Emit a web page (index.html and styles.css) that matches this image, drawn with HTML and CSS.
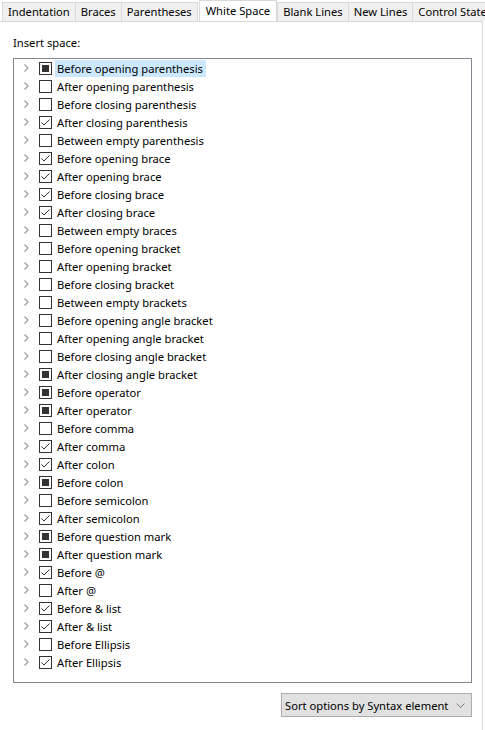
FILE: index.html
```html
<!DOCTYPE html>
<html>
<head>
<meta charset="utf-8">
<link rel="stylesheet" href="styles.css">
</head>
<body>
<div class="tabs">
  <div class="tab first">Indentation</div>
  <div class="tab">Braces</div>
  <div class="tab">Parentheses</div>
  <div class="tab active">White Space</div>
  <div class="tab">Blank Lines</div>
  <div class="tab">New Lines</div>
  <div class="tab">Control State</div>
</div>
<div class="panel">
  <div class="label">Insert space:</div>
  <div class="tree" id="tree"></div>
  <div class="footer">
    <div class="select">
      <span class="select-text">Sort options by Syntax element</span>
      <svg class="caret" width="9" height="5" viewBox="0 0 9 5"><path d="M0.5 0.5 L4.5 4.5 L8.5 0.5" fill="none" stroke="#7a7a7a" stroke-width="1"/></svg>
    </div>
  </div>
</div>
<script src="app.js"></script>
</body>
</html>
```
FILE: app.js
```js
var items = [
  ["Before opening parenthesis","i"],
  ["After opening parenthesis",""],
  ["Before closing parenthesis",""],
  ["After closing parenthesis","c"],
  ["Between empty parenthesis",""],
  ["Before opening brace","c"],
  ["After opening brace","c"],
  ["Before closing brace","c"],
  ["After closing brace","c"],
  ["Between empty braces",""],
  ["Before opening bracket",""],
  ["After opening bracket",""],
  ["Before closing bracket",""],
  ["Between empty brackets",""],
  ["Before opening angle bracket",""],
  ["After opening angle bracket",""],
  ["Before closing angle bracket",""],
  ["After closing angle bracket","i"],
  ["Before operator","i"],
  ["After operator","i"],
  ["Before comma",""],
  ["After comma","c"],
  ["After colon","c"],
  ["Before colon","i"],
  ["Before semicolon",""],
  ["After semicolon","c"],
  ["Before question mark","i"],
  ["After question mark","i"],
  ["Before @","c"],
  ["After @",""],
  ["Before & list","c"],
  ["After & list","c"],
  ["Before Ellipsis",""],
  ["After Ellipsis","c"]
];
var tree = document.getElementById("tree");
var chev = '<svg class="chev" width="5" height="8" viewBox="0 0 5 8"><path d="M0.5 0.5 L4 4 L0.5 7.5" fill="none" stroke="#999" stroke-width="1.1"/></svg>';
var check = '<svg class="mark" width="11" height="11" viewBox="0 0 11 11"><path d="M1.5 5.5 L4 8 L9.5 2.5" fill="none" stroke="#333" stroke-width="1"/></svg>';
items.forEach(function (it, idx) {
  var row = document.createElement("div");
  row.className = "row";
  var box = '<span class="box">' +
    (it[1] === "c" ? check : it[1] === "i" ? '<span class="fill"></span>' : "") + '</span>';
  var text = document.createElement("span");
  text.className = "text" + (idx === 0 ? " sel" : "");
  text.textContent = it[0];
  row.innerHTML = chev + box;
  row.appendChild(text);
  tree.appendChild(row);
});
```
FILE: styles.css
```css
html, body {
  margin: 0;
  padding: 0;
  background: #fff;
}
body {
  width: 485px;
  height: 730px;
  overflow: hidden;
  font-family: "Noto Sans", "Open Sans", sans-serif;
  font-size: 11.2px;
  color: #000;
}
.tabs {
  display: flex;
  height: 21px;
  align-items: flex-end;
  padding-left: 2px;
  white-space: nowrap;
  overflow: hidden;
}
.tab {
  height: 19px;
  line-height: 18px;
  box-sizing: border-box;
  padding: 0 5px;
  background: #f0f0f0;
  border: 1px solid #d9d9d9;
  border-bottom: none;
  margin-left: -1px;
  flex: none;
}
.tab.first {
  margin-left: 0;
}
.tab.active {
  height: 22px;
  line-height: 20px;
  background: #fff;
  padding: 0 6px;
  margin-left: 1px;
  margin-right: 1px;
  position: relative;
  z-index: 1;
  margin-bottom: -1px;
}
.panel {
  border-top: 1px solid #d9d9d9;
  border-right: 1px solid #d9d9d9;
  width: 483px;
  box-sizing: border-box;
  height: 709px;
  padding: 13px 0 0 13px;
}
.label {
  height: 23px;
  line-height: 16px;
}
.tree {
  width: 459px;
  height: 625px;
  box-sizing: border-box;
  border: 1px solid #828790;
}
.row {
  height: 18px;
  display: flex;
  align-items: center;
}
.chev {
  margin-left: 10px;
  flex: none;
}
.box {
  width: 13px;
  height: 13px;
  box-sizing: border-box;
  border: 1px solid #333;
  background: #fff;
  margin-left: 10px;
  display: flex;
  align-items: center;
  justify-content: center;
  flex: none;
}
.fill {
  width: 7px;
  height: 7px;
  background: #333;
}
.text {
  margin-left: 3px;
  padding: 0 3px 0 2px;
  line-height: 17px;
  white-space: nowrap;
}
.text.sel {
  background: #cce8ff;
}
.footer {
  display: flex;
  justify-content: flex-end;
  width: 459px;
  padding-top: 10px;
}
.select {
  width: 191px;
  height: 24px;
  box-sizing: border-box;
  border: 1px solid #adadad;
  background: #e1e1e1;
  display: flex;
  align-items: center;
  justify-content: space-between;
  padding: 0 6px 0 3px;
}
.select-text {
  white-space: nowrap;
}
.caret {
  flex: none;
}
```
